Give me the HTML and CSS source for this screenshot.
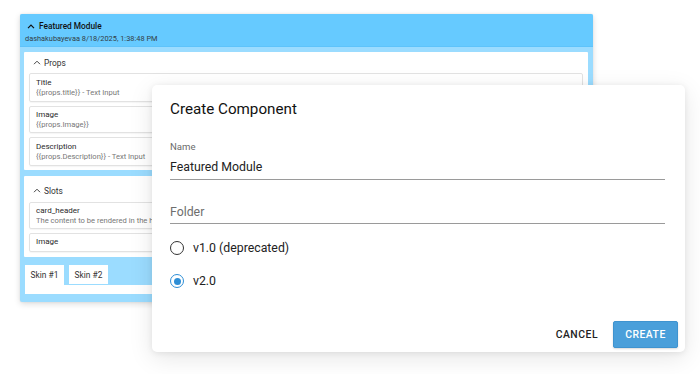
FILE: index.html
```html
<!DOCTYPE html>
<html>
<head>
<meta charset="utf-8">
<link rel="stylesheet" href="styles.css">
</head>
<body>
<div class="stage">
  <div class="card">
    <div class="card-head">
      <div class="head-title">
        <svg class="caret" width="8" height="5" viewBox="0 0 8 5"><path d="M1 4.2 L4 1.2 L7 4.2" fill="none" stroke="#111" stroke-width="1.2"/></svg>
        <span>Featured Module</span>
      </div>
      <div class="head-sub">dashakubayevaa 8/18/2025, 1:38:48 PM</div>
    </div>
    <div class="card-body">
      <div class="panel">
        <div class="panel-title">
          <svg class="caret" width="8" height="5" viewBox="0 0 8 5"><path d="M1 4.2 L4 1.2 L7 4.2" fill="none" stroke="#444" stroke-width="1"/></svg>
          <span>Props</span>
        </div>
        <div class="rows">
          <div class="row tall"><div class="row-name">Title</div><div class="row-desc">{{props.title}} - Text Input</div></div>
          <div class="row"><div class="row-name">Image</div><div class="row-desc">{{props.Image}}</div></div>
          <div class="row tall"><div class="row-name">Description</div><div class="row-desc">{{props.Description}} - Text Input</div></div>
        </div>
      </div>
      <div class="panel slots">
        <div class="panel-title">
          <svg class="caret" width="8" height="5" viewBox="0 0 8 5"><path d="M1 4.2 L4 1.2 L7 4.2" fill="none" stroke="#444" stroke-width="1"/></svg>
          <span>Slots</span>
        </div>
        <div class="rows">
          <div class="row"><div class="row-name">card_header</div><div class="row-desc clip">The content to be rendered in the he</div></div>
          <div class="row single"><div class="row-name">Image</div></div>
        </div>
      </div>
      <div class="tabs">
        <div class="tab active">Skin #1</div>
        <div class="tab">Skin #2</div>
      </div>
      <div class="tab-content"></div>
    </div>
  </div>

  <div class="dialog">
    <div class="dlg-title">Create Component</div>
    <div class="field first">
      <div class="field-label">Name</div>
      <div class="field-input">Featured Module</div>
    </div>
    <div class="field">
      <div class="field-input placeholder">Folder</div>
    </div>
    <div class="radio-row first">
      <span class="radio"></span>
      <span class="radio-label">v1.0 (deprecated)</span>
    </div>
    <div class="radio-row">
      <span class="radio checked"></span>
      <span class="radio-label">v2.0</span>
    </div>
    <div class="actions">
      <button class="btn btn-text">CANCEL</button>
      <button class="btn btn-primary">CREATE</button>
    </div>
  </div>
</div>
</body>
</html>
```

FILE: styles.css
```css
* { box-sizing: border-box; }
html, body { margin: 0; padding: 0; background: #fff; }
body { font-family: Roboto, "Noto Sans", Arial, sans-serif; color: #212121; }

.stage {
  position: relative;
  width: 700px;
  height: 374px;
  padding: 14px 0 0 20px;
  overflow: hidden;
}

/* back card */
.card {
  width: 573px;
  height: 288px;
  background: #9bdcff;
  border-radius: 2px;
  box-shadow: 0 2px 6px rgba(0,0,0,0.14), 0 0 2px rgba(0,0,0,0.08);
  display: flex;
  flex-direction: column;
}
.card-head {
  background: #66caff;
  height: 33px;
  padding: 6px 0 0 5px;
  border-bottom: 1px solid #5ec3fa;
  border-radius: 2px 2px 0 0;
}
.head-title {
  display: flex;
  align-items: center;
  gap: 4px;
  height: 12px;
  padding-left: 2px;
  font-size: 8.3px;
  font-weight: 500;
  color: #111;
}
.head-sub {
  margin-top: 1px;
  height: 12px;
  line-height: 12px;
  font-size: 7.4px;
  color: #333d45;
}
.card-body {
  flex: 1;
  padding: 5px 5px 0 4px;
  display: flex;
  flex-direction: column;
}
.panel {
  background: #fff;
  padding: 0 5px 4px 5px;
  border-radius: 1px;
}
.panel-title {
  height: 21px;
  display: flex;
  align-items: center;
  gap: 3px;
  padding-left: 4px;
  font-size: 8.4px;
  color: #333;
}
.panel-title .caret { margin-top: -1px; }
.rows { display: flex; flex-direction: column; gap: 4px; }
.row {
  border: 1px solid #e2e2e2;
  border-radius: 2px;
  height: 27px;
  padding: 3px 6px 0 6px;
  box-shadow: 0 1px 1px rgba(0,0,0,0.04);
}
.row.tall { height: 29px; padding-top: 4px; }
.row.single { height: 19px; padding-top: 3px; }
.row-name { font-size: 8px; line-height: 10px; color: #2a2a2a; }
.row-desc { font-size: 7.6px; line-height: 10px; color: #777; white-space: nowrap; overflow: hidden; }
.panel.slots { margin-top: 6px; padding-bottom: 5px; }
.panel.slots .panel-title { height: 26px; padding-top: 3px; }

.tabs {
  margin-top: 8px;
  display: flex;
  gap: 5px;
  padding-left: 1px;
}
.tab {
  width: 39px;
  height: 19px;
  background: #fff;
  font-size: 8.4px;
  color: #333;
  display: flex;
  align-items: center;
  justify-content: center;
}
.tab.active { height: 20px; }
.tab-content {
  height: 9px;
  margin-left: 1px;
  background: #fff;
}

/* dialog */
.dialog {
  position: absolute;
  left: 152px;
  top: 85px;
  width: 533px;
  height: 267px;
  background: #fff;
  border-radius: 5px;
  box-shadow: 0 6px 24px rgba(0,0,0,0.10), 0 1px 6px rgba(0,0,0,0.08);
  padding: 14px 7px 4px 18px;
  display: flex;
  flex-direction: column;
}
.dlg-title {
  font-size: 15.2px;
  line-height: 20px;
  font-weight: 400;
  color: #111;
}
.field {
  margin-right: 13px;
  border-bottom: 1px solid #9a9a9a;
  margin-top: 24px;
}
.field.first { margin-top: 22px; }
.field-label {
  font-size: 9.6px;
  line-height: 12px;
  color: #6b6b6b;
  margin-bottom: 6px;
}
.field-input {
  font-size: 12.3px;
  line-height: 16px;
  color: #222;
  padding-bottom: 4px;
}
.field-input.placeholder { color: #6e6e6e; padding-bottom: 3px; }

.radio-row {
  display: flex;
  align-items: center;
  height: 16px;
  margin-top: 17px;
}
.radio-row.first { margin-top: 16px; }
.radio {
  width: 14px;
  height: 14px;
  border-radius: 50%;
  border: 1.5px solid #333;
  margin-right: 9px;
  display: flex;
  align-items: center;
  justify-content: center;
}
.radio.checked { border-color: #2d8ed6; }
.radio.checked::after {
  content: "";
  width: 7px;
  height: 7px;
  border-radius: 50%;
  background: #2d8ed6;
}
.radio-label { font-size: 12.3px; color: #222; }

.actions {
  margin-top: auto;
  display: flex;
  justify-content: flex-end;
  align-items: center;
  gap: 7px;
}
.btn {
  font-family: Roboto, Arial, sans-serif;
  font-size: 10.4px;
  font-weight: 500;
  letter-spacing: 0.5px;
  height: 27px;
  border: none;
  border-radius: 2px;
  padding: 0 8px;
  cursor: pointer;
}
.btn-text { background: transparent; color: #222; }
.btn-primary {
  width: 65px;
  background: #4a9fda;
  color: #fff;
  border: 1px solid #3f93cf;
  box-shadow: 0 1px 2px rgba(0,0,0,0.15);
}
```
